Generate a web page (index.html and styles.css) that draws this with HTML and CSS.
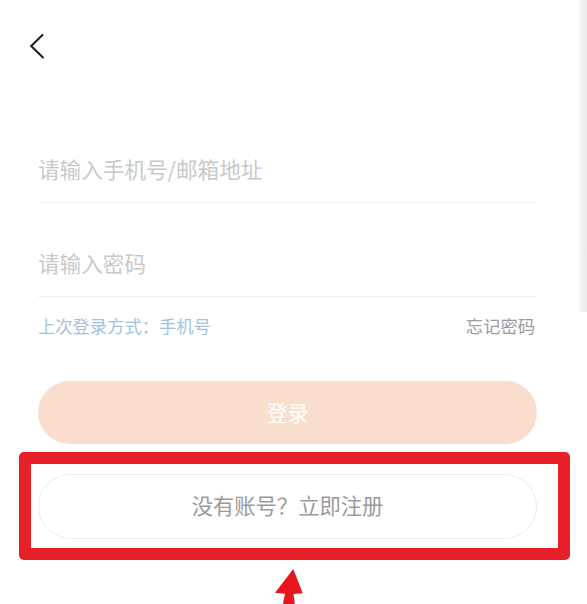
FILE: index.html
```html
<!DOCTYPE html>
<html lang="zh-CN">
<head>
<meta charset="utf-8">
<title>登录</title>
<link rel="stylesheet" href="styles.css">
</head>
<body>
<div class="page">
  <div class="top">
    <svg class="back" width="16" height="26" viewBox="0 0 16 26">
      <polyline points="13.5,2 2.2,13 14,24.5" fill="none" stroke="#222" stroke-width="2.1" stroke-linecap="round" stroke-linejoin="miter"/>
    </svg>
  </div>
  <div class="form">
    <div class="field first"><span class="ph">请输入手机号/邮箱地址</span></div>
    <div class="field"><span class="ph">请输入密码</span></div>
    <div class="row">
      <span class="last">上次登录方式：手机号</span>
      <span class="forgot">忘记密码</span>
    </div>
    <div class="btn login">登录</div>
    <div class="btn register">没有账号？立即注册</div>
  </div>
  <div class="edge"></div>
  <div class="highlight"></div>
  <svg class="arrow" width="40" height="39" viewBox="0 0 40 39">
    <polygon points="23.3,4 32.7,28.3 23.5,29 25,40 12.7,40 15,28.7 5,27.7" fill="#e8141f"/>
  </svg>
</div>
</body>
</html>
```
FILE: styles.css
```css
html, body {
  margin: 0;
  padding: 0;
  background: #ffffff;
}
body {
  font-family: "Noto Sans CJK SC", "Noto Sans", sans-serif;
  width: 587px;
  height: 604px;
  overflow: hidden;
}
.page {
  position: relative;
  width: 587px;
  height: 604px;
}
.top {
  padding-top: 33px;
  padding-left: 29px;
  height: 26px;
}
.back {
  display: block;
}
.form {
  padding: 0 50px 0 38px;
  display: flex;
  flex-direction: column;
}
.field {
  height: 55px;
  padding-bottom: 6px;
  border-bottom: 1px solid #f0f0f0;
  display: flex;
  align-items: center;
  margin-top: 32px;
}
.field.first {
  margin-top: 82px;
}
.ph {
  font-size: 21.6px;
  color: #c9c9c9;
  line-height: 28px;
}
.row {
  margin-top: 17px;
  height: 24px;
  display: flex;
  justify-content: space-between;
  align-items: center;
  font-size: 17.3px;
  line-height: 24px;
}
.last {
  color: #9fc3de;
}
.forgot {
  color: #9c9c9c;
  margin-right: 2px;
}
.btn {
  display: flex;
  align-items: center;
  justify-content: center;
  border-radius: 33px;
  font-size: 21.3px;
  box-sizing: border-box;
}
.login {
  margin-top: 43px;
  height: 63px;
  padding-bottom: 3px;
  background: #f9decd;
  color: #ffffff;
}
.register {
  margin-top: 30px;
  height: 65px;
  padding-bottom: 4px;
  border: 1px solid #e3edf2;
  color: #9a9a9a;
  background: #ffffff;
}
.edge {
  position: absolute;
  right: 0;
  top: 0;
  width: 8px;
  height: 312px;
  background: linear-gradient(to right, #f7f7f8, #e9e9ec);
}
.highlight {
  position: absolute;
  left: 19px;
  top: 452px;
  width: 527px;
  height: 84px;
  border: 12px solid #e81e28;
  border-radius: 5px;
}
.arrow {
  position: absolute;
  left: 270px;
  top: 565px;
}
```
